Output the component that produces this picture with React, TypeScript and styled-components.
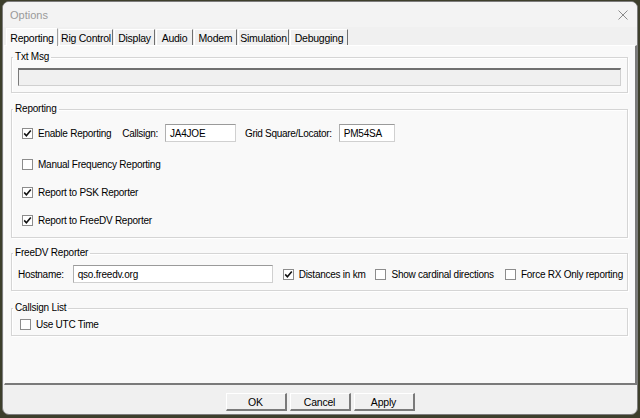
import styled, { createGlobalStyle } from 'styled-components'

const GlobalStyle = createGlobalStyle`
  html, body {
    margin: 0;
    padding: 0;
    background: #3d3f2c;
    font-family: 'Liberation Sans', Arial, sans-serif;
    font-size: 10px;
    color: #000;
  }
`

const Window = styled.div`
  margin: 1px 0 0 2px;
  width: 636px;
  height: 414px;
  box-sizing: border-box;
  border: 1px solid #7c7c7c;
  border-radius: 7px;
  background: #f0f0f0;
  display: flex;
  flex-direction: column;
  overflow: hidden;
`

const TitleBar = styled.div`
  height: 25px;
  display: flex;
  align-items: center;
  justify-content: space-between;
  padding: 0 6px 0 7px;
  background: #f3f3f3;
  color: #9a9a9a;
  font-size: 11px;
`

const Close = styled.div`
  width: 16px;
  height: 16px;
  display: flex;
  align-items: center;
  justify-content: center;
`

const TabBar = styled.div`
  height: 18px;
  display: flex;
  align-items: flex-end;
  padding-left: 3px;
`

const Tab = styled.div<{ w: number; active?: boolean }>`
  width: ${({ w }) => w}px;
  height: ${({ active }) => (active ? 18 : 16)}px;
  box-sizing: border-box;
  display: flex;
  align-items: center;
  justify-content: center;
  font-size: 10.5px;
  letter-spacing: -0.25px;
  background: ${({ active }) => (active ? '#f9f9f9' : '#f0f0f0')};
  border-left: 1px solid #ffffff;
  border-top: 1px solid #ffffff;
  border-right: 1px solid ${({ active }) => (active ? '#a0a0a0' : '#6f6f6f')};
  margin-right: 1px;
  position: relative;
  z-index: ${({ active }) => (active ? 1 : 0)};
  margin-bottom: ${({ active }) => (active ? '-1px' : '0')};
`

const Panel = styled.div`
  margin: 0 0 0 1px;
  width: 633px;
  height: 340px;
  box-sizing: border-box;
  background: #f9f9f9;
  border-top: 1px solid #ffffff;
  border-left: 1px solid #ffffff;
  border-right: 2px solid #7a7a7a;
  border-bottom: 2px solid #7a7a7a;
  padding: 5px 7px 0 6px;
  display: flex;
  flex-direction: column;
`

const Group = styled.fieldset<{ gap: number; pb: number }>`
  margin: ${({ gap }) => gap}px 0 0 0;
  padding: 0 6px ${({ pb }) => pb}px 6px;
  border: 1px solid #d5d5d5;
  box-shadow: inset 1px 1px 0 #ffffff, 1px 1px 0 #ffffff;
  min-width: 0;
`

const Legend = styled.legend`
  margin-left: -5px;
  padding: 0 2px;
  font-size: 10px;
  line-height: 12px;
  letter-spacing: -0.2px;
`

const Row = styled.div<{ mt: number; h?: number }>`
  margin-top: ${({ mt }) => mt}px;
  height: ${({ h }) => h ?? 18}px;
  display: flex;
  align-items: center;
`

const TextBox = styled.div<{ w: number; disabled?: boolean }>`
  flex-shrink: 0;
  width: ${({ w }) => w}px;
  height: 18px;
  box-sizing: border-box;
  background: ${({ disabled }) => (disabled ? '#f0f0f0' : '#ffffff')};
  border: 1px solid #d0d0d0;
  border-top: ${({ disabled }) => (disabled ? '2px solid #6f6f6f' : '1px solid #9a9a9a')};
  border-left: 1px solid ${({ disabled }) => (disabled ? '#7a7a7a' : '#b0b0b0')};
  display: flex;
  align-items: center;
  padding-left: 4px;
  font-size: 10px;
  letter-spacing: -0.2px;
`

const Label = styled.span<{ ml?: number; mr?: number }>`
  margin-left: ${({ ml }) => ml ?? 0}px;
  margin-right: ${({ mr }) => mr ?? 0}px;
  font-size: 10px;
  letter-spacing: -0.3px;
  white-space: nowrap;
`

const Check = styled.label<{ ml?: number }>`
  margin-left: ${({ ml }) => ml ?? 0}px;
  display: flex;
  align-items: center;
  gap: 5px;
  font-size: 10px;
  letter-spacing: -0.25px;
  white-space: nowrap;
`

const Box = styled.span`
  flex-shrink: 0;
  width: 11px;
  height: 11px;
  box-sizing: border-box;
  border: 1px solid #8c8c8c;
  background: #ffffff;
  display: flex;
  align-items: center;
  justify-content: center;
`

const Footer = styled.div`
  flex: 1;
  display: flex;
  justify-content: center;
  align-items: flex-start;
  padding-top: 8px;
  gap: 3px;
`

const Button = styled.div`
  width: 61px;
  height: 18px;
  box-sizing: border-box;
  background: #f0f0f0;
  border-top: 1px solid #ffffff;
  border-left: 1px solid #ffffff;
  border-right: 2px solid #7a7a7a;
  border-bottom: 2px solid #7a7a7a;
  display: flex;
  align-items: center;
  justify-content: center;
  font-size: 10.5px;
  letter-spacing: -0.2px;
`

const CheckBox = ({ checked, label, ml }: { checked?: boolean; label: string; ml?: number }) => (
  <Check ml={ml}>
    <Box>
      {checked && (
        <svg width="9" height="9" viewBox="0 0 9 9">
          <path d="M1.2 4.4 L3.4 6.8 L7.8 1.6" fill="none" stroke="#111" strokeWidth="1.6" />
        </svg>
      )}
    </Box>
    {label}
  </Check>
)

const tabs = [
  { name: 'Reporting', w: 52 },
  { name: 'Rig Control', w: 54 },
  { name: 'Display', w: 41 },
  { name: 'Audio', w: 37 },
  { name: 'Modem', w: 43 },
  { name: 'Simulation', w: 51 },
  { name: 'Debugging', w: 58 },
]

export default function App() {
  return (
    <>
      <GlobalStyle />
      <Window>
        <TitleBar>
          <span>Options</span>
          <Close>
            <svg width="10" height="10" viewBox="0 0 10 10">
              <path d="M0.5 0.5 L9.5 9.5 M9.5 0.5 L0.5 9.5" stroke="#8a8a8a" strokeWidth="1" />
            </svg>
          </Close>
        </TitleBar>
        <TabBar>
          {tabs.map((t, i) => (
            <Tab key={t.name} w={t.w} active={i === 0}>
              {t.name}
            </Tab>
          ))}
        </TabBar>
        <Panel>
          <Group gap={0} pb={6}>
            <Legend>Txt Msg</Legend>
            <Row mt={5}>
              <TextBox w={603} disabled />
            </Row>
          </Group>

          <Group gap={10} pb={8}>
            <Legend>Reporting</Legend>
            <Row mt={9}>
              <CheckBox ml={4} checked label="Enable Reporting" />
              <Label ml={11} mr={7}>Callsign:</Label>
              <TextBox w={71}>JA4JOE</TextBox>
              <Label ml={9} mr={7}>Grid Square/Locator:</Label>
              <TextBox w={56}>PM54SA</TextBox>
            </Row>
            <Row mt={13}>
              <CheckBox ml={4} label="Manual Frequency Reporting" />
            </Row>
            <Row mt={10}>
              <CheckBox ml={4} checked label="Report to PSK Reporter" />
            </Row>
            <Row mt={10}>
              <CheckBox ml={4} checked label="Report to FreeDV Reporter" />
            </Row>
          </Group>

          <Group gap={9} pb={7}>
            <Legend>FreeDV Reporter</Legend>
            <Row mt={6}>
              <Label mr={9}>Hostname:</Label>
              <TextBox w={200}>qso.freedv.org</TextBox>
              <CheckBox ml={10} checked label="Distances in km" />
              <CheckBox ml={10} label="Show cardinal directions" />
              <CheckBox ml={11} label="Force RX Only reporting" />
            </Row>
          </Group>

          <Group gap={11} pb={4}>
            <Legend>Callsign List</Legend>
            <Row mt={3} h={14}>
              <CheckBox ml={2} label="Use UTC Time" />
            </Row>
          </Group>
        </Panel>
        <Footer>
          <Button>OK</Button>
          <Button>Cancel</Button>
          <Button>Apply</Button>
        </Footer>
      </Window>
    </>
  )
}
